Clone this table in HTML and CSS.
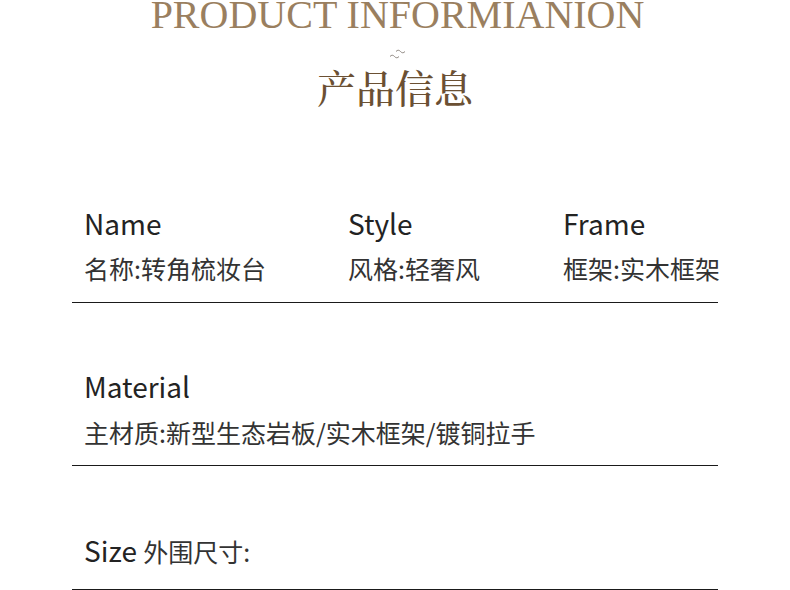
FILE: index.html
```html
<!DOCTYPE html>
<html lang="zh">
<head>
<meta charset="utf-8">
<link rel="stylesheet" href="styles.css">
</head>
<body>
<header class="head">
  <div class="en">PRODUCT INFORMIANION</div>
  <svg class="wave" width="20" height="12" viewBox="0 0 20 12">
    <path d="M9 3.5 C10.5 1.8 12 1.8 13.5 3.5 S16.5 5.2 18 3.5" fill="none" stroke="#8f8882" stroke-width="1"/>
    <path d="M3 8.5 C4.5 6.8 6 6.8 7.5 8.5 S10.5 10.2 12 8.5" fill="none" stroke="#8f8882" stroke-width="1"/>
  </svg>
  <h1 class="cn">产品信息</h1>
</header>
<section class="table">
  <div class="row first">
    <div class="cell">
      <div class="label">Name</div>
      <div class="value">名称:转角梳妆台</div>
    </div>
    <div class="cell">
      <div class="label">Style</div>
      <div class="value">风格:轻奢风</div>
    </div>
    <div class="cell">
      <div class="label">Frame</div>
      <div class="value">框架:实木框架</div>
    </div>
  </div>
  <div class="row second">
    <div class="cell">
      <div class="label">Material</div>
      <div class="value">主材质:新型生态岩板/实木框架/镀铜拉手</div>
    </div>
  </div>
  <div class="row third">
    <div class="label">Size <span class="inline">外围尺寸:</span></div>
  </div>
</section>
</body>
</html>
```

FILE: styles.css
```css
html, body {
  margin: 0;
  padding: 0;
  background: #ffffff;
}
body {
  width: 790px;
  height: 590px;
  overflow: hidden;
  font-family: "Noto Sans CJK SC", "Noto Sans", sans-serif;
  color: #2b2b2b;
}
.head {
  display: flex;
  flex-direction: column;
  align-items: center;
}
.en {
  font-family: "Liberation Serif", "DejaVu Serif", serif;
  font-size: 40px;
  line-height: 30px;
  height: 30px;
  color: #9a7f5f;
  white-space: nowrap;
  margin-left: 5px;
}
.wave {
  display: block;
  margin-top: 18px;
  margin-left: 4px;
}
.cn {
  margin: 2px 0 0 0;
  font-family: "Noto Serif CJK SC", "Noto Sans CJK SC", serif;
  font-weight: 500;
  font-size: 39px;
  line-height: 48px;
  color: #6b5033;
}
.table {
  margin: 90px 72px 0 72px;
  width: 646px;
}
.row {
  border-bottom: 1.5px solid #1a1a1a;
  padding-left: 12px;
  box-sizing: border-box;
  display: flex;
  flex-direction: column;
  justify-content: flex-end;
}
.row.first {
  display: grid;
  grid-template-columns: 264px 215px 1fr;
  justify-content: start;
  align-content: end;
  height: 103px;
  padding-bottom: 16px;
}
.row.second {
  height: 163px;
  padding-bottom: 15px;
}
.row.third {
  height: 124px;
  padding-bottom: 20px;
}
.label {
  font-size: 28px;
  line-height: 36px;
  color: #232323;
  white-space: nowrap;
}
.value {
  font-size: 25px;
  line-height: 36px;
  margin-top: 9px;
  color: #333333;
  white-space: nowrap;
}
.row.second .value {
  margin-top: 10px;
}
.inline {
  font-size: 25px;
  color: #333333;
}
```
